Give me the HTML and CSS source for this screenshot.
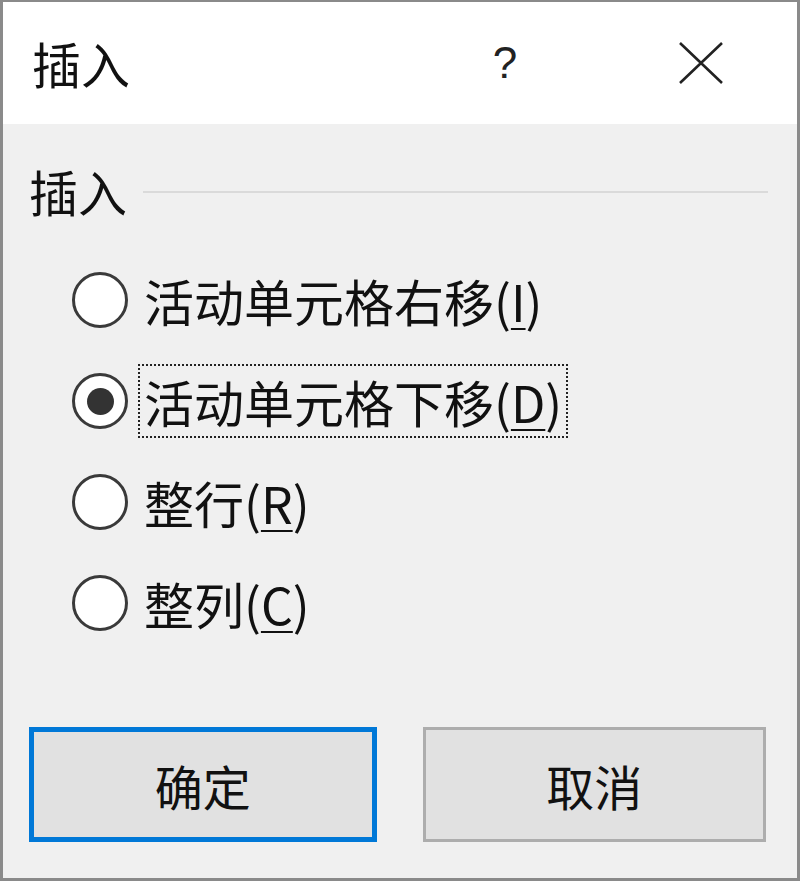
FILE: index.html
```html
<!DOCTYPE html>
<html lang="zh-CN">
<head>
  <meta charset="UTF-8">
  <title>插入</title>
  <link rel="stylesheet" href="styles.css">
</head>
<body>
  <div class="dialog">
    <div class="titlebar">
      <span class="title">插入</span>
      <span class="help">?</span>
      <span class="close">
        <svg width="46" height="42" viewBox="0 0 46 42">
          <path d="M2 1 L44 41 M44 1 L2 41" stroke="#222" stroke-width="2.6" fill="none"/>
        </svg>
      </span>
    </div>

    <div class="body">
      <div class="group-head">
        <span class="group-label">插入</span>
        <span class="group-line"></span>
      </div>

      <div class="options">
        <label class="option">
          <span class="radio"></span>
          <span class="text">活动单元格右移(<u>I</u>)</span>
        </label>
        <label class="option">
          <span class="radio checked"></span>
          <span class="text focused">活动单元格下移(<u>D</u>)</span>
        </label>
        <label class="option">
          <span class="radio"></span>
          <span class="text">整行(<u>R</u>)</span>
        </label>
        <label class="option">
          <span class="radio"></span>
          <span class="text">整列(<u>C</u>)</span>
        </label>
      </div>

      <div class="buttons">
        <button class="btn default">确定</button>
        <button class="btn">取消</button>
      </div>
    </div>
  </div>
</body>
</html>
```

FILE: styles.css
```css
html, body {
  margin: 0;
  height: 100%;
}
body {
  font-family: "Noto Sans CJK SC", "Liberation Sans", sans-serif;
  color: #111;
  background: #f0f0f0;
}
.dialog {
  box-sizing: border-box;
  height: 881px;
  border: 3px solid #8a8a8a;
  border-top-width: 2px;
  display: flex;
  flex-direction: column;
  background: #f0f0f0;
}
.titlebar {
  height: 122px;
  background: #fff;
  display: flex;
  align-items: center;
  padding-left: 29px;
}
.title {
  font-size: 49px;
  flex: 1;
  margin-top: -2px;
}
.help {
  font-family: "Liberation Sans", sans-serif;
  font-size: 44px;
  color: #222;
  width: 40px;
  text-align: center;
  margin-right: 153px;
}
.close {
  display: flex;
  margin-right: 73px;
}
.body {
  flex: 1;
  display: flex;
  flex-direction: column;
  padding: 39px 31px 0 26px;
}
.group-head {
  display: flex;
  align-items: center;
  gap: 16px;
}
.group-label {
  font-size: 49px;
  line-height: 56px;
}
.group-line {
  flex: 1;
  height: 2px;
  background: #dadada;
  margin-top: 2px;
  margin-right: -2px;
}
.options {
  display: flex;
  flex-direction: column;
  gap: 27px;
  padding: 44px 0 0 43px;
}
.option {
  display: flex;
  align-items: center;
  height: 74px;
}
.radio {
  box-sizing: border-box;
  width: 56px;
  height: 56px;
  border: 3px solid #3a3a3a;
  border-radius: 50%;
  background: #fff;
  display: flex;
  align-items: center;
  justify-content: center;
  margin-right: 10px;
}
.radio.checked::after {
  content: "";
  width: 27px;
  height: 27px;
  border-radius: 50%;
  background: #333;
}
.text {
  font-size: 50px;
  line-height: 70px;
  padding: 0 4px;
  border: 2px dotted transparent;
}
.text.focused {
  border-color: #222;
}
.text u {
  text-underline-offset: 6px;
  text-decoration-thickness: 2px;
}
.buttons {
  display: flex;
  gap: 46px;
  margin-top: auto;
  margin-bottom: 36px;
}
.btn {
  box-sizing: border-box;
  flex: 1;
  height: 115px;
  font-family: inherit;
  font-size: 48px;
  color: #111;
  background: #e1e1e1;
  border: 3px solid #adadad;
}
.btn.default {
  border: 5px solid #0078d7;
}
```
